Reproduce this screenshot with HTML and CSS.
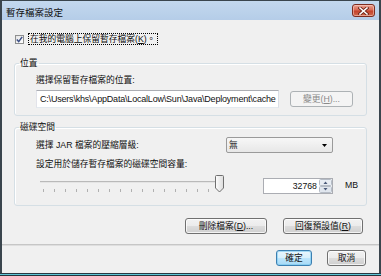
FILE: index.html
```html
<!DOCTYPE html>
<html lang="zh-Hant">
<head>
<meta charset="utf-8">
<title>暫存檔案設定</title>
<link rel="stylesheet" href="styles.css">
</head>
<body>
<div class="window">
  <div class="titlebar">
    <span class="title">暫存檔案設定</span>
    <span class="close">
      <svg width="11" height="8" viewBox="0 0 11 8"><path d="M2 1 L9 7 M9 1 L2 7" stroke="#6b2418" stroke-width="3.2" stroke-linecap="square"/><path d="M2 1 L9 7 M9 1 L2 7" stroke="#fff" stroke-width="1.6" stroke-linecap="square"/></svg>
    </span>
  </div>
  <div class="main">
    <div class="keep">
      <span class="checkbox"><svg width="7" height="7" viewBox="0 0 7 7"><path d="M0.8 3.6 L2.7 5.6 L6.2 0.9" fill="none" stroke="#3c4f86" stroke-width="1.5"/></svg></span>
      <span class="keep-label">在我的電腦上保留暫存檔案(<u>K</u>)。</span>
    </div>
    <fieldset class="group group-loc">
      <legend>位置</legend>
      <div class="caption">選擇保留暫存檔案的位置:</div>
      <div class="path-row">
        <div class="path">C:\Users\khs\AppData\LocalLow\Sun\Java\Deployment\cache</div>
        <span class="btn btn-disabled change">變更(<u>H</u>)...</span>
      </div>
    </fieldset>
    <fieldset class="group group-disk">
      <legend>磁碟空間</legend>
      <div class="jar-row">
        <span>選擇 JAR 檔案的壓縮層級:</span>
        <span class="select"><span class="select-value">無</span><svg class="select-arrow" width="5" height="3" viewBox="0 0 5 3"><path d="M0 0 H5 L2.5 3 Z" fill="#000"/></svg></span>
      </div>
      <div class="caption">設定用於儲存暫存檔案的磁碟空間容量:</div>
      <div class="size-row">
        <svg class="slider" width="184" height="20" viewBox="0 0 184 20">
          <defs><linearGradient id="thumb" x1="0" y1="0" x2="1" y2="0"><stop offset="0" stop-color="#fdfdfd"/><stop offset="1" stop-color="#dcdcdc"/></linearGradient></defs>
          <rect x="0" y="7" width="183" height="1" fill="#b9b9b9"/>
          <rect x="0" y="8" width="183" height="1" fill="#e4e4e4"/>
          <g fill="#b0b0b0">
            <rect x="3" y="15" width="1" height="3"/><rect x="14" y="15" width="1" height="3"/><rect x="25" y="15" width="1" height="3"/><rect x="36" y="15" width="1" height="3"/><rect x="47" y="15" width="1" height="3"/><rect x="58" y="15" width="1" height="3"/><rect x="69" y="15" width="1" height="3"/><rect x="80" y="15" width="1" height="3"/><rect x="91" y="15" width="1" height="3"/><rect x="102" y="15" width="1" height="3"/><rect x="113" y="15" width="1" height="3"/><rect x="124" y="15" width="1" height="3"/><rect x="135" y="15" width="1" height="3"/><rect x="146" y="15" width="1" height="3"/><rect x="157" y="15" width="1" height="3"/><rect x="168" y="15" width="1" height="3"/><rect x="179" y="15" width="1" height="3"/>
          </g>
          <path d="M176.5 1.5 H182.5 Q183.5 1.5 183.5 2.5 V14 L179.5 18 L175.5 14 V2.5 Q175.5 1.5 176.5 1.5 Z" fill="url(#thumb)" stroke="#6f6f6f"/>
        </svg>
        <span class="spinner">
          <span class="spin-value">32768</span>
          <svg class="spin-arrows" width="13" height="14" viewBox="0 0 13 14">
            <rect x="0.5" y="0.5" width="12" height="6" rx="1" fill="#e8edf3" stroke="#b5bcc6"/>
            <rect x="0.5" y="7.5" width="12" height="6" rx="1" fill="#e0e6ee" stroke="#b5bcc6"/>
            <path d="M4.5 5 H8.5 L6.5 2.5 Z" fill="#4a5a78"/>
            <path d="M4.5 9 H8.5 L6.5 11.5 Z" fill="#4a5a78"/>
          </svg>
        </span>
        <span class="unit">MB</span>
      </div>
    </fieldset>
    <div class="actions">
      <span class="btn delete">刪除檔案(<u>D</u>)...</span>
      <span class="btn restore">回復預設值(<u>R</u>)</span>
    </div>
  </div>
  <div class="separator"></div>
  <div class="footer">
    <span class="btn btn-default ok">確定</span>
    <span class="btn cancel">取消</span>
  </div>
</div>
</body>
</html>
```
FILE: styles.css
```css
* { box-sizing: border-box; }
html, body { margin: 0; padding: 0; background: #ffffff; }
body {
  font-family: "Liberation Sans", "Noto Sans CJK TC", sans-serif;
  font-size: 8.75px;
  line-height: 12px;
  color: #111;
}
u { text-decoration: underline; text-underline-offset: 1px; }

.window {
  width: 381px;
  height: 276px;
  padding: 1px 2px 3px 2px;
  background: #f0f0f0;
  display: flex;
  flex-direction: column;
  box-shadow:
    inset 0 -1px 0 #27343c,
    inset 0 -2px 0 #5ec6d6,
    inset 0 -3px 0 #2b3a44,
    inset 2px 0 0 #3a454d,
    inset -2px 0 0 #3a454d,
    inset 0 1px 0 #3a454d;
}

.titlebar {
  height: 19px;
  flex: none;
  display: flex;
  align-items: flex-start;
  padding: 3px 4px 0 4px;
  background: linear-gradient(#c3d8ee, #b5cde8);
}
.title {
  margin-top: 3px;
  font-size: 9.5px;
  line-height: 12px;
}
.close {
  margin-left: auto;
  width: 23px;
  height: 13px;
  border: 1px solid #7c2c20;
  border-radius: 3px;
  background: linear-gradient(#eaa292 0%, #d86a55 45%, #c4422b 55%, #cf6a4e 100%);
  box-shadow: inset 0 0 0 1px rgba(255, 220, 210, 0.5);
  display: flex;
  align-items: center;
  justify-content: center;
}

.main {
  flex: none;
  padding: 0 12px;
}

.keep {
  display: flex;
  align-items: center;
  height: 12px;
  margin-top: 13px;
}
.checkbox {
  width: 9px;
  height: 9px;
  margin-left: 1px;
  border: 1px solid #8e8f8f;
  background: linear-gradient(135deg, #e4e4e4, #ffffff);
  display: flex;
  align-items: center;
  justify-content: center;
}
.keep-label {
  margin-left: 4px;
  height: 12px;
  line-height: 10px;
  padding: 0 2px 0 1px;
  border: 1px dotted #000;
}

.group {
  margin: 12px 0 0 0;
  padding: 0 0 7px 0;
  border: 1px solid #d5dfe5;
  border-radius: 3px;
  min-width: 0;
  box-shadow: inset 1px 1px 0 #ffffff;
}
.group legend {
  margin-left: 4px;
  padding: 0 1px;
  line-height: 12px;
}
.group-disk {
  margin-top: 5px;
  padding-bottom: 11px;
}

.caption {
  margin: 5px 0 0 21px;
  height: 12px;
}

.path-row {
  display: flex;
  align-items: center;
  margin: 4px 0 0 21px;
}
.path {
  width: 243px;
  height: 18px;
  border: 1px solid;
  border-color: #abadb3 #dbdfe6 #e3e9ef #e2e3ea;
  background: #fff;
  padding-left: 3px;
  font-size: 9px;
  line-height: 16px;
  letter-spacing: -0.2px;
  white-space: nowrap;
  overflow: hidden;
}

.btn {
  display: flex;
  align-items: center;
  justify-content: center;
  height: 16px;
  border: 1px solid #707070;
  border-radius: 3px;
  background: linear-gradient(#f2f2f2 0%, #ebebeb 50%, #dddddd 50%, #cfcfcf 100%);
  box-shadow: inset 0 0 0 1px rgba(255, 255, 255, 0.75);
  white-space: nowrap;
}
.btn-disabled {
  border-color: #adb2b5;
  background: #f4f4f4;
  color: #8a8a8a;
  box-shadow: none;
}
.btn-default {
  border-color: #3c7fb1;
  background: linear-gradient(#eaf6fd 0%, #d9f0fc 50%, #bee6fd 50%, #a7d9f5 100%);
  box-shadow: inset 0 0 0 1px rgba(120, 200, 240, 0.6);
}
.change { width: 63px; margin-left: 11px; }

.jar-row {
  display: flex;
  align-items: center;
  height: 16px;
  margin: 4px 33px 0 21px;
}
.select {
  margin-left: auto;
  width: 107px;
  height: 16px;
  display: flex;
  align-items: center;
  border: 1px solid #9a9a9a;
  border-radius: 2px;
  background: linear-gradient(#f7f7f7, #e7e7e7);
  padding: 0 5px 0 2px;
}
.select-arrow { margin-left: auto; }

.size-row {
  display: flex;
  align-items: flex-start;
  margin: 4px 0 0 25px;
}
.slider { display: block; flex: none; }
.spinner {
  margin: 4px 0 0 39px;
  width: 70px;
  height: 16px;
  display: flex;
  align-items: center;
  border: 1px solid #abadb3;
  background: #fff;
}
.spin-value {
  flex: 1;
  text-align: right;
  padding-right: 2px;
}
.spin-arrows { display: block; }
.unit {
  margin: 5px 0 0 12px;
}

.actions {
  display: flex;
  justify-content: flex-end;
  gap: 16px;
  margin-top: 12px;
  padding-right: 4px;
}
.delete { width: 82px; }
.restore { width: 80px; }

.separator {
  flex: none;
  margin-top: 10px;
  height: 2px;
  border-top: 1px solid #c6c6c6;
  border-bottom: 1px solid #dedede;
}

.footer {
  flex: 1;
  display: flex;
  justify-content: flex-end;
  align-items: flex-start;
  gap: 15px;
  padding: 4px 13px 0 0;
}
.ok { width: 36px; }
.cancel { width: 39px; }
```
